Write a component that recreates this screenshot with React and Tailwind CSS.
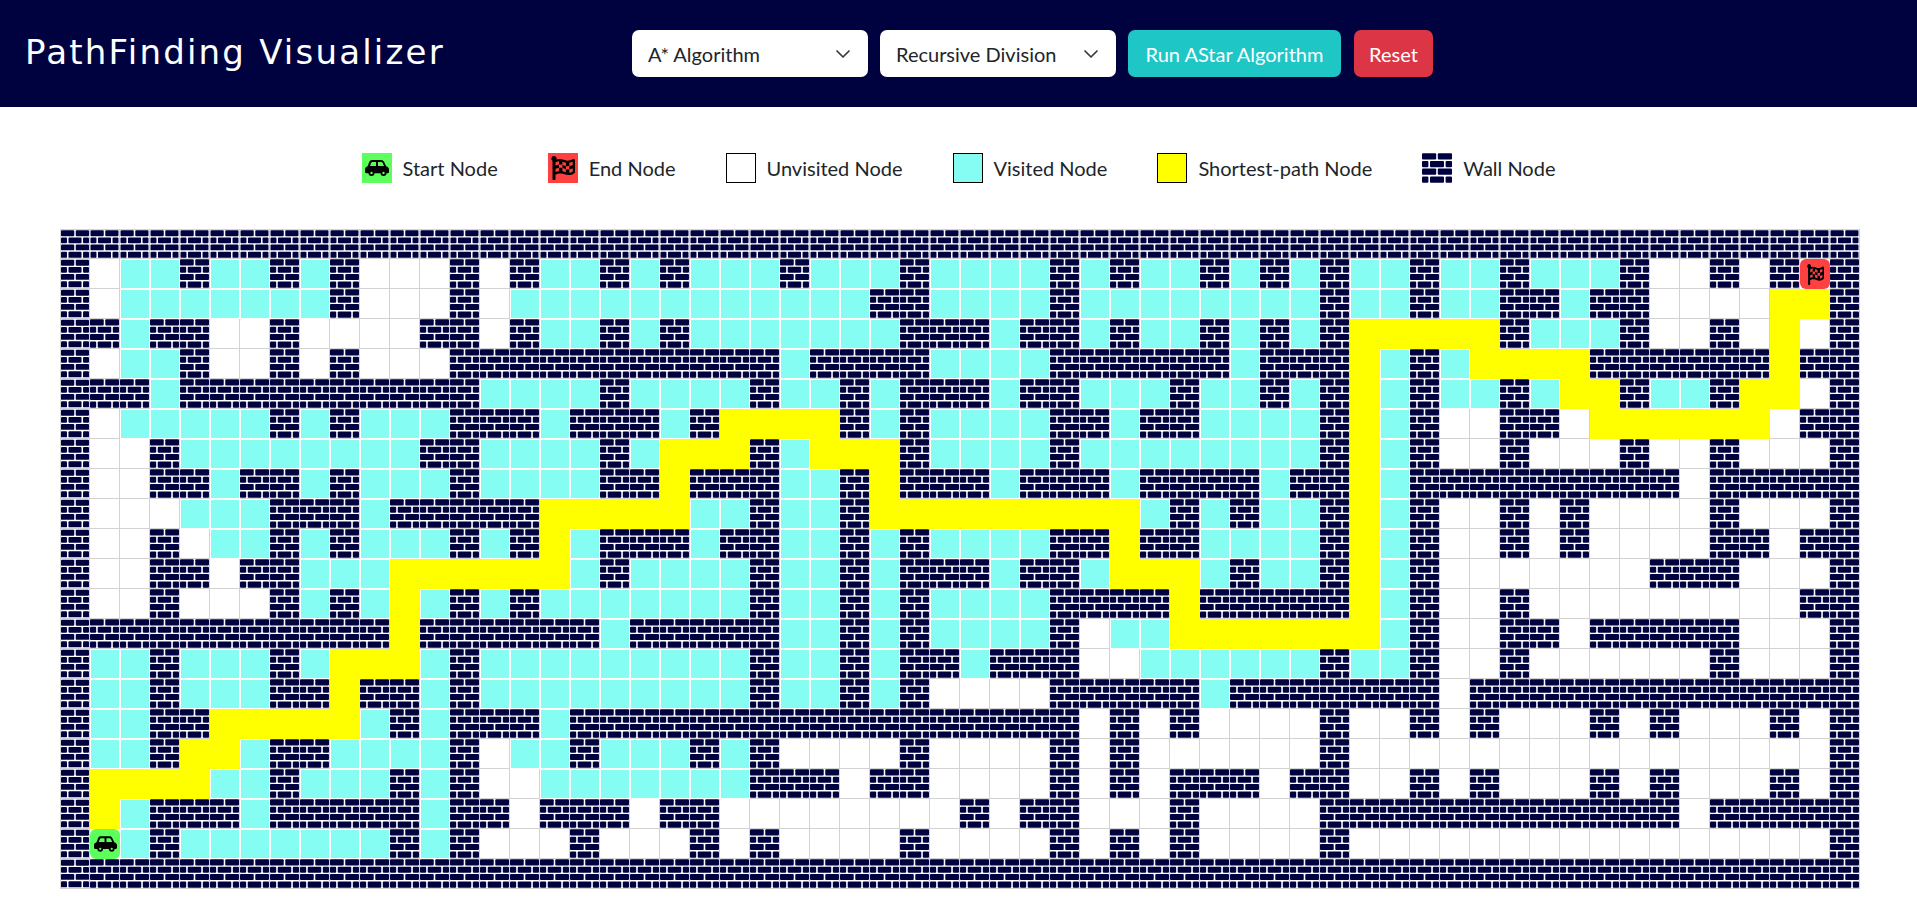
import { FaFlagCheckered } from 'react-icons/fa';

// # wall, . unvisited, v visited, y shortest path, S start, E end
const GRID = [
  '########## ########## ########## ########## ########## ##########',
  '#.vv#vv#v# ...#.#vv#v #vvv#vvv#v vvv#v#vv#v #v#vv#vv#v vv#..#.#E#',
  '#.vvvvvvv# ...#.vvvvv vvvvvvv##v vvv#vvvvvv vv#vv#vv## v##....yy#',
  '##v##..#.. ..##.#vv#v #vvvvvvv## #v##v#vv#v #v#yyyyy#v vv#..#.y.#',
  '#.vv#..#.# ...####### ####v####v vvv######v ###yv#vyyy y######y##',
  '###v###### ####vvvv#v vvv#vv#v## #v##vvv#vv #v#yv#vv#v yy#vv#yy.#',
  '#.vvvvv#v# vvv###v### v#yyyy#v#v vvv##v##vv vv#yv#..## .yyyyyy.##',
  '#..#vvvvvv vv##vvvv#v yyy#vyyy#v vvv#vvvvvv vv#yv#..#. ..#..#...#',
  '#..##v##v# vvv#vvvv## y###vv#y## #v###v#### v##yv##### ####.#####',
  '#...vvv### v#####yyyy yvv#vv#yyy yyyyyyv#v# vv#yv#..#. #....#...#',
  '#..#.vv#v# vvv#v#yv## #v##vv#v#v vvv##y##vv vv#yv#..#. #....##.##',
  '#..##.##vv vyyyyyyv#v vvv#vv#v## #v##vyyyv# vv#yv#.... ...###...#',
  '#..#...#v# vyv#v#vvvv vvv#vv#v#v vvv####y## ###yv#..#. ........##',
  '########## #y######v# ####vv#v#v vvv#.vvyyy yyyyv#..## .#####...#',
  '#vv#vvv#vy yyv#vvvvvv vvv#vv#v## v###..vvvv vv#vv#..#. .....#...#',
  '#vv#vvv##y ##v#vvvvvv vvv#vv#v#. ...#####v# ######.### ##########',
  '#vv##yyyyy v#v###v### ########## ####.#.#.. ..#..#.#.. .#.#...#.#',
  '#vv#yyv##v vvv#.vv#vv v#v#....#. ...#.#.... ..#....... .........#',
  '#yyyyvv#vv v#v#..vvvv vvv###.##. ...#.#.### .##..#.#.. .#.#...#.#',
  '#yv###v### ##v##.###. ##........ #.##...#.. ..######## ####.#####',
  '#Sv#vvvvvv v#v#...#.. .#.#....#. ...#.#.#.. ..#....... .........#',
  '########## ########## ########## ########## ########## ##########',
].map((line) => line.replaceAll(' ', ''));

function WallIcon({ className }) {
  return (
    <svg viewBox="0 0 30 30" className={className} fill="#00023f">
      <rect x="0" y="0.2" width="14.2" height="6.4" rx="1" />
      <rect x="15.8" y="0.2" width="14.2" height="6.4" rx="1" />
      <rect x="0" y="8" width="6.4" height="6.2" rx="1" />
      <rect x="8" y="8" width="14" height="6.2" rx="1" />
      <rect x="23.6" y="8" width="6.4" height="6.2" rx="1" />
      <rect x="0" y="15.6" width="14.2" height="6.2" rx="1" />
      <rect x="15.8" y="15.6" width="14.2" height="6.2" rx="1" />
      <rect x="0" y="23.4" width="6.4" height="6.4" rx="1" />
      <rect x="8" y="23.4" width="14" height="6.4" rx="1" />
      <rect x="23.6" y="23.4" width="6.4" height="6.4" rx="1" />
    </svg>
  );
}

function CarIcon({ className }) {
  return (
    <svg viewBox="0 0 24 16" className={className}>
      <path
        fill="#000"
        fillRule="evenodd"
        d="M7 0h9c1.5 0 2.5.7 3.2 2l2 4.2c1.7.5 2.8 1.7 2.8 3.3V12c0 .8-.6 1.2-1.2 1.2H1.2C.5 13.2 0 12.7 0 12V9.5C0 7.8 1 6.6 2.6 6.2L4.2 2C4.8.7 5.7 0 7 0zM7.4 2c-.6 0-1 .3-1.2.8L5 6h6V2zM13 2v4h6l-1.4-3.2C17.3 2.3 16.9 2 16.3 2z"
      />
      <circle cx="6.5" cy="13" r="3" fill="#000" />
      <circle cx="6.5" cy="13" r="1.2" fill="#5cff5c" />
      <circle cx="18.5" cy="13" r="3" fill="#000" />
      <circle cx="18.5" cy="13" r="1.2" fill="#5cff5c" />
    </svg>
  );
}

function Cell({ type, row, col }) {
  const edges = `${row === 0 ? 'border-t' : ''} ${col === 0 ? 'border-l' : ''}`;

  if (type === '#') {
    return (
      <div className={`w-[30px] h-[30px] border-r border-b border-[#d3d3d3] ${edges}`}>
        <WallIcon className="w-full h-full block" />
      </div>
    );
  }
  if (type === 'v') {
    return <div className="w-[30px] h-[30px] border border-white bg-[#85fdf3]" />;
  }
  if (type === 'y') {
    return <div className="w-[30px] h-[30px] bg-[#ffff00]" />;
  }
  if (type === 'S') {
    return (
      <div className="w-[30px] h-[30px] rounded-md bg-[#5cff5c] flex items-center justify-center">
        <CarIcon className="w-[23px] h-[16px]" />
      </div>
    );
  }
  if (type === 'E') {
    return (
      <div className="w-[30px] h-[30px] rounded-md bg-[#ff4040] flex items-center justify-center">
        <FaFlagCheckered className="w-[17px] h-[21px] text-black" preserveAspectRatio="none" />
      </div>
    );
  }
  return <div className="w-[30px] h-[30px] border-r border-b border-[#d3d3d3] bg-white" />;
}

function LegendItem({ label, children }) {
  return (
    <div className="flex items-center gap-[11px]">
      {children}
      <span className="text-[20px] text-[#212529]">{label}</span>
    </div>
  );
}

function Select({ label, className }) {
  return (
    <div className={`relative h-[47px] bg-white rounded-[7px] flex items-center pl-4 text-[20px] text-[#212529] ${className}`}>
      {label}
      <svg viewBox="0 0 16 16" className="absolute right-[17px] top-[16px] w-[16px] h-[16px]" fill="none" stroke="#343a40" strokeWidth="1.7" strokeLinecap="round" strokeLinejoin="round">
        <path d="M2 5l6 6 6-6" />
      </svg>
    </div>
  );
}

export default function App() {
  return (
    <div className="min-h-screen bg-white font-['Lato',sans-serif]">
      <header className="h-[107px] bg-[#00023f] flex items-center">
        <h1 className="w-[632px] pl-[25px] pb-[2px] text-white text-[34px] font-['DejaVu_Sans',sans-serif] tracking-[2.2px] whitespace-nowrap">
          PathFinding Visualizer
        </h1>
        <div className="flex items-center gap-3">
          <Select label="A* Algorithm" className="w-[236px]" />
          <Select label="Recursive Division" className="w-[236px]" />
          <button className="h-[47px] w-[213px] rounded-[7px] bg-[#1fc6c6] text-white text-[20px]">
            Run AStar Algorithm
          </button>
          <button className="ml-px h-[47px] w-[79px] rounded-[7px] bg-[#dc3545] text-white text-[20px]">
            Reset
          </button>
        </div>
      </header>

      <div className="mt-[46px] flex justify-center gap-[50px] h-[30px]">
        <LegendItem label="Start Node">
          <div className="w-[30px] h-[30px] bg-[#5cff5c] flex items-center justify-center">
            <CarIcon className="w-[24px] h-[16px]" />
          </div>
        </LegendItem>
        <LegendItem label="End Node">
          <div className="w-[30px] h-[30px] bg-[#ff4040] flex items-center justify-center">
            <FaFlagCheckered className="w-[24px] h-[24px] text-black" />
          </div>
        </LegendItem>
        <LegendItem label="Unvisited Node">
          <div className="w-[30px] h-[30px] border border-black bg-white" />
        </LegendItem>
        <LegendItem label="Visited Node">
          <div className="w-[30px] h-[30px] border border-black bg-[#85fdf3]" />
        </LegendItem>
        <LegendItem label="Shortest-path Node">
          <div className="w-[30px] h-[30px] border border-black bg-[#ffff00]" />
        </LegendItem>
        <LegendItem label="Wall Node">
          <WallIcon className="w-[30px] h-[30px]" />
        </LegendItem>
      </div>

      <div className="mt-[46px] ml-[60px] grid grid-cols-[repeat(60,30px)] auto-rows-[30px] w-[1800px]">
        {GRID.map((line, row) =>
          line.split('').map((type, col) => (
            <Cell key={`${row}-${col}`} type={type} row={row} col={col} />
          ))
        )}
      </div>
    </div>
  );
}
